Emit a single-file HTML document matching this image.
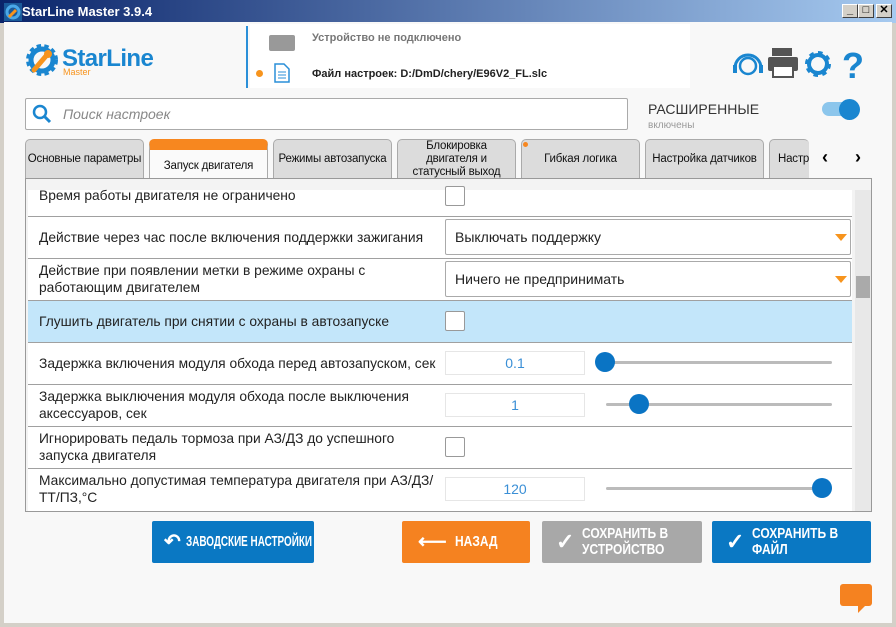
<!DOCTYPE html>
<html><head><meta charset="utf-8"><style>
*{margin:0;padding:0;box-sizing:border-box}
body{width:896px;height:627px;overflow:hidden;background:#d4d0c8;font-family:"Liberation Sans",sans-serif;position:relative}
.a{position:absolute}
#win{left:4px;top:22px;width:888px;height:601px;background:#f8f8f8}
#title{left:0;top:0;width:896px;height:23px;background:linear-gradient(90deg,#0a246a,#a6caf0);color:#fff;font-weight:bold;font-size:13px;line-height:23px;padding-left:22px}
.wb{top:4px;width:16px;height:14px;background:#d4d0c8;border:1px solid;border-color:#fff #404040 #404040 #fff;font-size:11px;line-height:11px;text-align:center;color:#000;font-weight:bold}
.row{position:absolute;left:28px;width:824px;border-bottom:1px solid #a0a0a0;background:#fff;font-size:13.8px;color:#222}
.lbl{position:absolute;left:11px;line-height:17px;white-space:nowrap}
.cb{position:absolute;left:417px;width:20px;height:20px;border:1px solid #999;border-radius:2px;background:#fff}
.dd{position:absolute;left:417px;width:406px;height:36px;border:1px solid #aaa;border-radius:2px;background:#fff;font-size:14px;line-height:34px;padding-left:9px}
.dd:after{content:"";position:absolute;right:3px;top:14px;border-left:6px solid transparent;border-right:6px solid transparent;border-top:7px solid #f7941d}
.num{position:absolute;left:417px;width:140px;height:24px;border:1px solid #e6e6e6;background:#fff;color:#3a8fd6;text-align:center;line-height:22px;font-size:14px}
.tr{position:absolute;left:578px;width:226px;height:3px;background:#bbb;border-radius:2px}
.kn{position:absolute;width:20px;height:20px;border-radius:50%;background:#0a74c4}
.tab{position:absolute;top:139px;width:119px;height:40px;background:#dcdcdc;border:1px solid #aaa;border-bottom:none;border-radius:5px 5px 0 0;font-size:11.5px;letter-spacing:-0.2px;color:#111;text-align:center;display:flex;align-items:center;justify-content:center;line-height:13px;white-space:nowrap}
.btn{position:absolute;top:521px;height:42px;color:#fff;font-weight:bold;font-size:15px;display:flex;align-items:center;border-radius:2px;line-height:16px;white-space:nowrap;overflow:hidden}
.btn b{display:inline-block;transform:scaleX(0.8);transform-origin:left center}
</style></head><body>
<div class="a" id="title">StarLine Master 3.9.4</div>
<svg class="a" style="left:4px;top:3px" width="18" height="18"><rect width="18" height="18" fill="#1a5a9a"/><circle cx="9" cy="9" r="6" fill="none" stroke="#4aa8e8" stroke-width="3"/><path d="M5 14 L12 7" stroke="#f7941d" stroke-width="3"/></svg>
<div class="a wb" style="left:842px">_</div><div class="a wb" style="left:858px">□</div><div class="a wb" style="left:876px">✕</div>
<div class="a" id="win"></div>
<div class="a" style="left:250px;top:24px;width:440px;height:64px;background:#fff"></div>
<div class="a" style="left:246px;top:26px;width:2px;height:62px;background:#2a8fd8"></div>
<svg class="a" style="left:24px;top:42px" width="40" height="36" viewBox="0 0 40 36"><circle cx="18" cy="18" r="13" fill="none" stroke="#1a86d0" stroke-width="6" stroke-dasharray="4 3"/><circle cx="18" cy="18" r="11" fill="none" stroke="#1a86d0" stroke-width="5"/><path d="M10 28 L22 14" stroke="#f7941d" stroke-width="5" stroke-linecap="round"/><circle cx="24" cy="12" r="4" fill="#f7941d"/></svg>
<div class="a" style="left:62px;top:45px;font-size:24px;font-weight:bold;color:#1a86d0;letter-spacing:-0.6px">StarLine</div>
<div class="a" style="left:63px;top:67px;font-size:9px;color:#f7941d">Master</div>
<div class="a" style="left:269px;top:35px;width:26px;height:16px;background:#999;border-radius:2px"></div>
<div class="a" style="left:312px;top:32px;font-size:11px;font-weight:bold;color:#777">Устройство не подключено</div>
<div class="a" style="left:256px;top:70px;width:7px;height:7px;border-radius:50%;background:#f7941d"></div>
<svg class="a" style="left:274px;top:63px" width="16" height="20"><path d="M1 1h9l5 5v13H1z" fill="#fff" stroke="#2a8fd8" stroke-width="1.5"/><path d="M4 9h8M4 12h8M4 15h8" stroke="#2a8fd8"/></svg>
<div class="a" style="left:312px;top:68px;font-size:11px;font-weight:bold;color:#222">Файл настроек: D:/DmD/chery/E96V2_FL.slc</div>
<svg class="a" style="left:732px;top:48px" width="135" height="32"><path d="M3 20 A13 13 0 0 1 29 20" fill="none" stroke="#1a86d0" stroke-width="3"/><circle cx="16" cy="18" r="8" fill="none" stroke="#1a86d0" stroke-width="2.5"/><rect x="1" y="17" width="4" height="8" fill="#1a86d0"/><rect x="27" y="17" width="4" height="8" fill="#1a86d0"/><rect x="40" y="0" width="20" height="8" fill="#555"/><rect x="36" y="9" width="30" height="14" rx="2" fill="#555"/><rect x="41" y="18" width="20" height="11" fill="#fff" stroke="#555" stroke-width="2"/><circle cx="86" cy="16" r="10" fill="none" stroke="#1a86d0" stroke-width="6" stroke-dasharray="4 3.8"/><circle cx="86" cy="16" r="9" fill="none" stroke="#1a86d0" stroke-width="4"/><text x="110" y="30" font-size="36" font-weight="bold" fill="#1a86d0" font-family="Liberation Sans">?</text></svg>
<div class="a" style="left:25px;top:98px;width:603px;height:32px;background:#fff;border:1px solid #aaa;border-radius:2px"></div>
<svg class="a" style="left:32px;top:104px" width="20" height="20"><circle cx="8" cy="8" r="6" fill="none" stroke="#1a86d0" stroke-width="2.5"/><path d="M12 12l6 6" stroke="#1a86d0" stroke-width="3"/></svg>
<div class="a" style="left:63px;top:106px;font-size:14px;font-style:italic;color:#888">Поиск настроек</div>
<div class="a" style="left:648px;top:101px;font-size:14px;color:#333">РАСШИРЕННЫЕ</div>
<div class="a" style="left:648px;top:120px;font-size:10px;color:#999">включены</div>
<div class="a" style="left:822px;top:102px;width:36px;height:14px;border-radius:7px;background:#8cc6ec"></div>
<div class="a" style="left:839px;top:99px;width:21px;height:21px;border-radius:50%;background:#1a86d0"></div>
<div class="tab" style="left:25px">Основные параметры</div>
<div class="tab" style="left:149px;background:#fafafa;border-top:11px solid #f7871f;padding-top:3px">Запуск двигателя</div>
<div class="tab" style="left:273px">Режимы автозапуска</div>
<div class="tab" style="left:397px">Блокировка<br>двигателя и<br>статусный выход</div>
<div class="tab" style="left:521px">Гибкая логика</div>
<div class="a" style="left:523px;top:142px;width:5px;height:5px;border-radius:50%;background:#f7871f"></div>
<div class="tab" style="left:645px">Настройка датчиков</div>
<div class="tab" style="left:769px;width:40px;justify-content:flex-start;padding-left:8px;overflow:hidden;border-right:none">Настройки</div>
<div class="a" style="left:822px;top:147px;font-size:18px;font-weight:bold">‹</div>
<div class="a" style="left:855px;top:147px;font-size:18px;font-weight:bold">›</div>
<div class="a" style="left:25px;top:178px;width:847px;height:334px;border:1px solid #999;background:#f3f3f3"></div>
<div class="a" style="left:855px;top:190px;width:16px;height:321px;background:#e8e8e8"></div>
<div class="a" style="left:856px;top:276px;width:14px;height:22px;background:#aaa"></div>
<div class="row" style="top:190px;height:27px"><div class="lbl" style="top:-3px">Время работы двигателя не ограничено</div><div class="cb" style="top:-4px"></div></div>
<div class="row" style="top:217px;height:42px"><div class="lbl" style="top:12px">Действие через час после включения поддержки зажигания</div><div class="dd" style="top:2px">Выключать поддержку</div></div>
<div class="row" style="top:259px;height:42px"><div class="lbl" style="top:3px">Действие при появлении метки в режиме охраны с<br>работающим двигателем</div><div class="dd" style="top:2px">Ничего не предпринимать</div></div>
<div class="row" style="top:301px;height:42px;background:#c3e6fa"><div class="lbl" style="top:12px">Глушить двигатель при снятии с охраны в автозапуске</div><div class="cb" style="top:10px"></div></div>
<div class="row" style="top:343px;height:42px"><div class="lbl" style="top:12px">Задержка включения модуля обхода перед автозапуском, сек</div><div class="num" style="top:8px">0.1</div><div class="tr" style="top:18px"></div><div class="kn" style="left:567px;top:9px"></div></div>
<div class="row" style="top:385px;height:42px"><div class="lbl" style="top:3px">Задержка выключения модуля обхода после выключения<br>аксессуаров, сек</div><div class="num" style="top:8px">1</div><div class="tr" style="top:18px"></div><div class="kn" style="left:601px;top:9px"></div></div>
<div class="row" style="top:427px;height:42px"><div class="lbl" style="top:3px">Игнорировать педаль тормоза при АЗ/ДЗ до успешного<br>запуска двигателя</div><div class="cb" style="top:10px"></div></div>
<div class="row" style="top:469px;height:42px;border-bottom:none"><div class="lbl" style="top:3px">Максимально допустимая температура двигателя при АЗ/ДЗ/<br>ТТ/ПЗ,°С</div><div class="num" style="top:8px">120</div><div class="tr" style="top:18px"></div><div class="kn" style="left:784px;top:9px"></div></div>
<div class="btn" style="left:152px;width:162px;background:#0a78c3;padding-left:12px"><span style="font-size:20px;margin-right:5px">↶</span><b style="transform:scaleX(0.66)">ЗАВОДСКИЕ НАСТРОЙКИ</b></div>
<div class="btn" style="left:402px;width:128px;background:#f58220;padding-left:16px"><span style="font-size:20px;margin-right:8px">⟵</span><b>НАЗАД</b></div>
<div class="btn" style="left:542px;width:160px;background:#a8a8a8;padding-left:14px"><span style="font-size:22px;margin-right:8px">✓</span><b>СОХРАНИТЬ В<br>УСТРОЙСТВО</b></div>
<div class="btn" style="left:712px;width:159px;background:#0a78c3;padding-left:14px"><span style="font-size:22px;margin-right:8px">✓</span><b>СОХРАНИТЬ В<br>ФАЙЛ</b></div>
<div class="a" style="left:840px;top:584px;width:32px;height:22px;background:#f58220;border-radius:3px"></div>
<div class="a" style="left:858px;top:605px;border-left:8px solid #f58220;border-bottom:8px solid transparent"></div>
</body></html>
